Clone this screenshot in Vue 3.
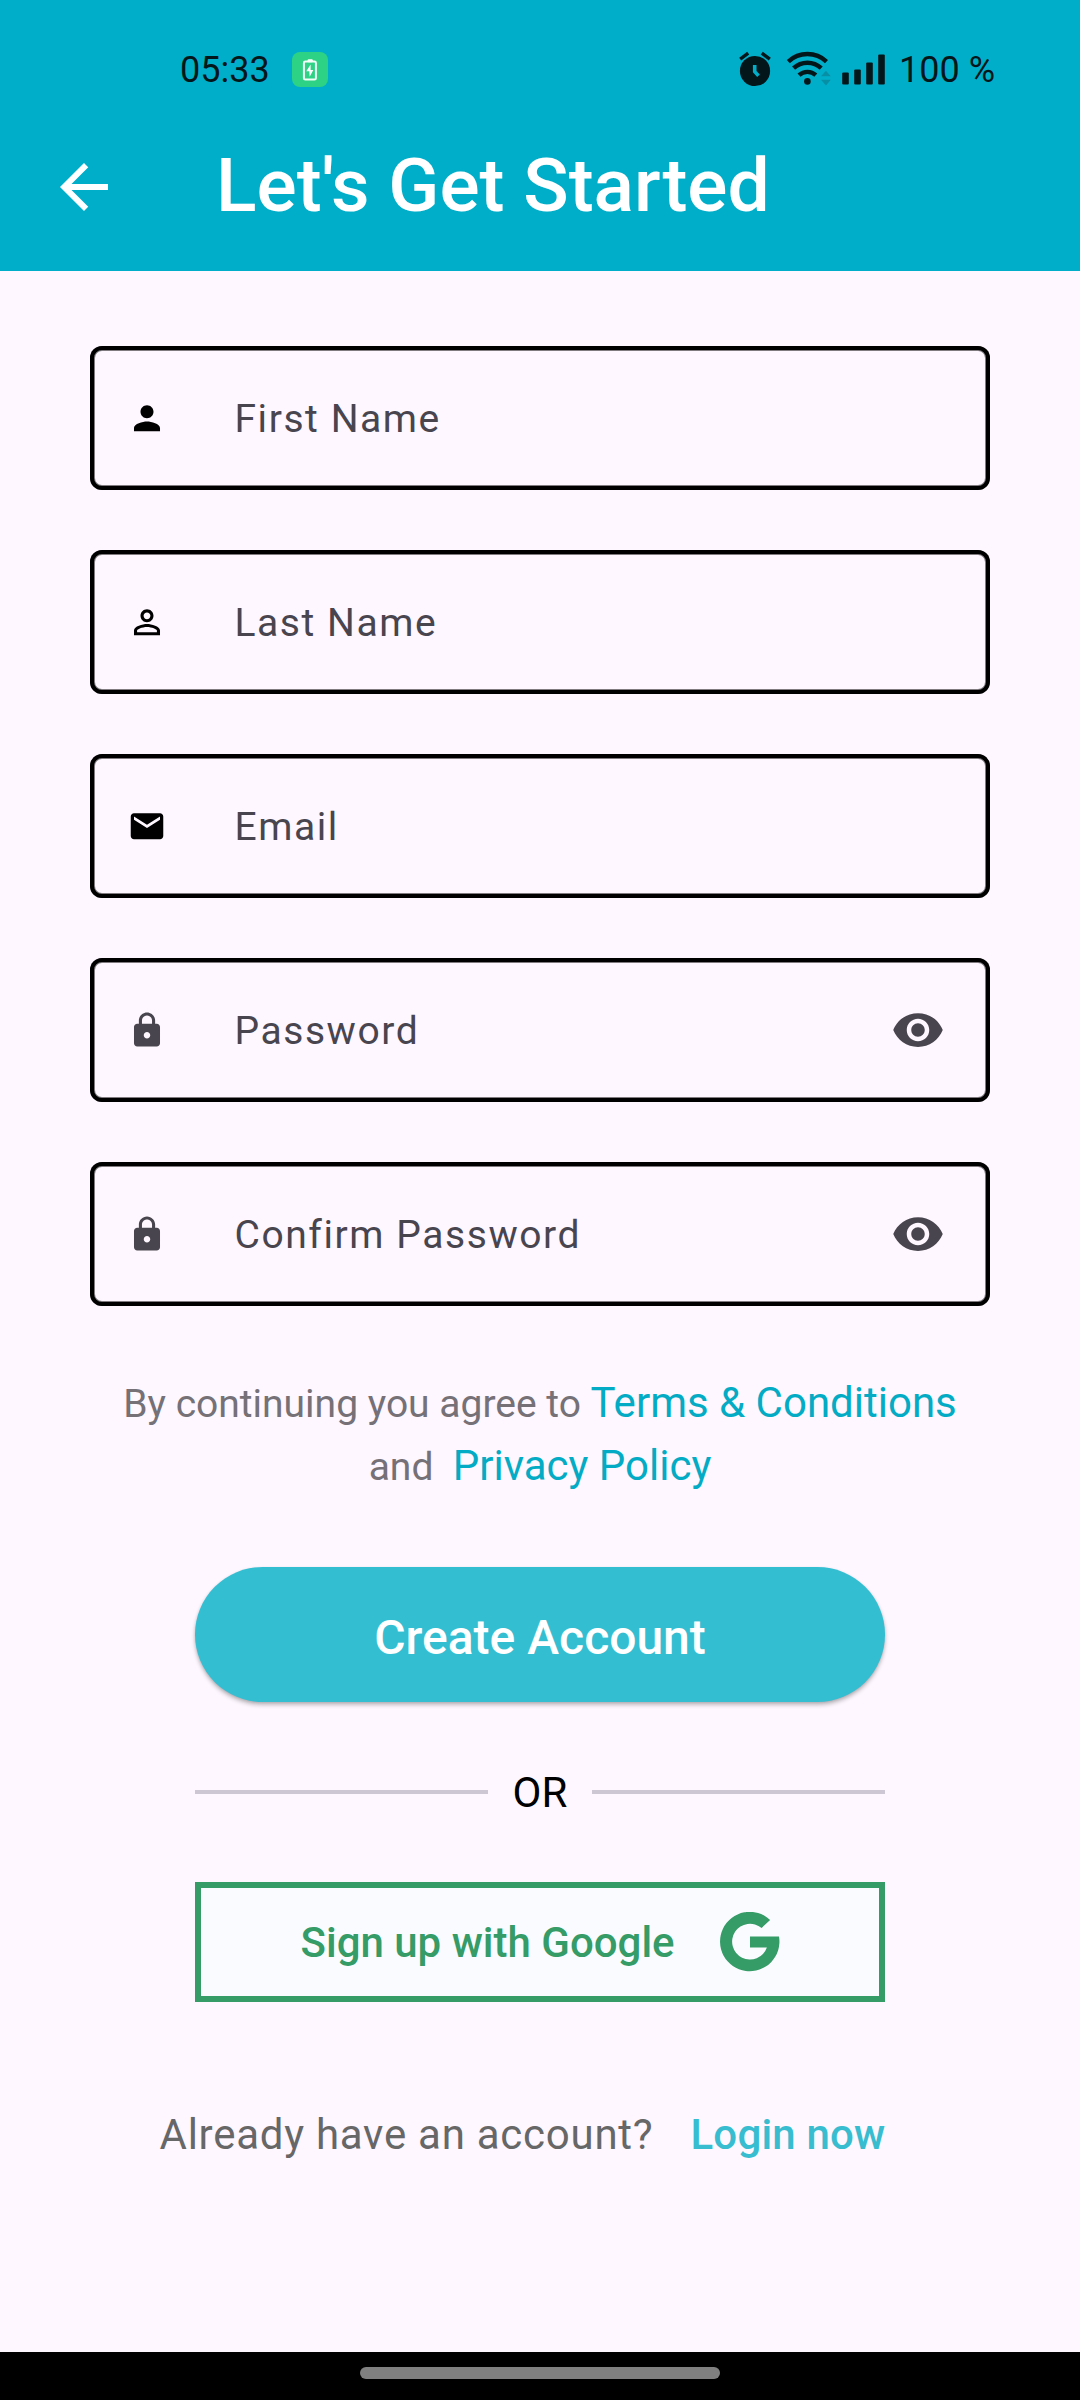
<script setup>
const fields = [
  { label: 'First Name', icon: 'person' },
  { label: 'Last Name', icon: 'personOutline' },
  { label: 'Email', icon: 'mail' },
  { label: 'Password', icon: 'lock', secret: true },
  { label: 'Confirm Password', icon: 'lock', secret: true },
]

const icons = {
  person: 'M12 12c2.21 0 4-1.79 4-4s-1.79-4-4-4-4 1.79-4 4 1.79 4 4 4zm0 2c-2.67 0-8 1.34-8 4v2h16v-2c0-2.66-5.33-4-8-4z',
  personOutline: 'M12 5.9c1.16 0 2.1.94 2.1 2.1s-.94 2.1-2.1 2.1S9.9 9.16 9.9 8s.94-2.1 2.1-2.1m0 9c2.97 0 6.1 1.46 6.1 2.1v1.1H5.9V17c0-.64 3.13-2.1 6.1-2.1M12 4C9.79 4 8 5.79 8 8s1.79 4 4 4 4-1.79 4-4-1.79-4-4-4zm0 9c-2.67 0-8 1.34-8 4v3h16v-3c0-2.66-5.33-4-8-4z',
  mail: 'M20 4H4c-1.1 0-1.99.9-1.99 2L2 18c0 1.1.9 2 2 2h16c1.1 0 2-.9 2-2V6c0-1.1-.9-2-2-2zm0 4l-8 5-8-5V6l8 5 8-5v2z',
  lock: 'M18 8h-1V6c0-2.76-2.24-5-5-5S7 3.24 7 6v2H6c-1.1 0-2 .9-2 2v10c0 1.1.9 2 2 2h12c1.1 0 2-.9 2-2V10c0-1.1-.9-2-2-2zm-6 9c-1.1 0-2-.9-2-2s.9-2 2-2 2 .9 2 2-.9 2-2 2zm3.1-9H8.9V6c0-1.71 1.39-3.1 3.1-3.1 1.71 0 3.1 1.39 3.1 3.1v2z',
  eye: 'M12 4.5C7 4.5 2.73 7.61 1 12c1.73 4.39 6 7.5 11 7.5s9.27-3.11 11-7.5c-1.73-4.39-6-7.5-11-7.5zM12 17c-2.76 0-5-2.24-5-5s2.24-5 5-5 5 2.24 5 5-2.24 5-5 5zm0-8c-1.66 0-3 1.34-3 3s1.34 3 3 3 3-1.34 3-3-1.34-3-3-3z',
}
</script>

<template>
  <div class="screen">
    <header class="header">
      <div class="status">
        <span class="clock">05:33</span>
        <svg class="charge" width="36" height="35" viewBox="0 0 36 35">
          <rect width="36" height="35" rx="8" fill="#2dd284" />
          <rect x="15.6" y="7.2" width="5.2" height="3" rx="1" fill="#fff" />
          <rect x="11.9" y="9.6" width="12" height="18" rx="1.4" fill="none" stroke="#f0fff8" stroke-width="2" />
          <path d="M18.6 12.6l-4.3 6.6h3l.4 5.6 3.6-6.9h-2.7z" fill="#fff" />
        </svg>

        <div class="indicators">
          <svg width="32" height="36" viewBox="739 50 32 36">
            <circle cx="755" cy="70" r="15.1" fill="#03161a" />
            <path d="M740.2 58.2l8-6M769.8 58.2l-8-6" stroke="#03161a" stroke-width="3.4" />
            <path d="M754.7 64v6.6l3.8 4.2" fill="none" stroke="#00aeca" stroke-width="3.6" />
          </svg>
          <svg class="wifi" width="46" height="36" viewBox="786 50 46 36">
            <g fill="none" stroke="#03161a" stroke-width="4.4">
              <path d="M788.3 60.6a28 28 0 0 1 38.2 0" />
              <path d="M793.6 67.2a20 20 0 0 1 27.6 0" />
              <path d="M799 74.2a12.4 12.4 0 0 1 16.8 0" />
            </g>
            <circle cx="807.4" cy="80.4" r="3.3" fill="#03161a" />
            <path d="M821 75.3l4.9-5.6 4.9 5.6zM821 78.8h9.8l-4.9 5.6z" fill="#078fa5" />
          </svg>
          <svg class="signal" width="44" height="31" viewBox="842 52.5 44 31" fill="#03161a">
            <rect x="842.2" y="71" width="6.6" height="12" rx="1" />
            <rect x="854.2" y="68" width="6.6" height="15" rx="1" />
            <rect x="866.2" y="61" width="6.6" height="22" rx="1" />
            <rect x="878.2" y="53" width="6.6" height="30" rx="1" />
          </svg>
          <span class="battery">100 %</span>
        </div>
      </div>
      <div class="toolbar">
        <svg class="back" width="72" height="72" viewBox="0 0 24 24" fill="#fff">
          <path d="M20 11H7.83l5.59-5.59L12 4l-8 8 8 8 1.41-1.41L7.83 13H20v-2z" />
        </svg>
        <h1>Let's Get Started</h1>
      </div>
    </header>

    <main class="content">
      <form class="form" @submit.prevent>
        <div v-for="f in fields" :key="f.label" class="field">
          <svg :class="{ muted: f.secret }" width="40" height="40" viewBox="-0.3 -0.5 24.6 24.6">
            <path :d="icons[f.icon]" />
          </svg>
          <span class="label">{{ f.label }}</span>
          <svg v-if="f.secret" class="muted" width="54" height="54" viewBox="0 0 24 24">
            <path :d="icons.eye" />
          </svg>
        </div>
      </form>

      <p class="terms">
        <span class="plain">By continuing you agree to </span><a>Terms &amp; Conditions</a><br />
        <span class="plain">and&nbsp; </span><a>Privacy Policy</a>
      </p>

      <button class="create" type="button">Create Account</button>

      <div class="divider"><i></i><span>OR</span><i></i></div>

      <button class="google" type="button">
        <span>Sign up with Google</span>
        <svg width="60" height="60" viewBox="0 0 60 60">
          <path d="M50.1 7.9A29.7 29.7 0 1 0 59 24.4H30v11.2h16.9A17.9 17.9 0 1 1 41.6 16z" fill="#359b67" />
        </svg>
      </button>

      <div class="login">
        <span>Already have an account?</span>
        <a>Login now</a>
      </div>
    </main>

    <footer class="navbar"><span></span></footer>
  </div>
</template>

<style>
body {
  margin: 0;
}
</style>

<style scoped>
.screen {
  width: 1080px;
  height: 2400px;
  display: flex;
  flex-direction: column;
  background: #fef7ff;
  font-family: Roboto, "Liberation Sans", sans-serif;
  overflow: hidden;
}
svg {
  display: block;
  flex: none;
}
.header {
  height: 271px;
  background: #00aeca;
}
.status {
  height: 101px;
  box-sizing: border-box;
  padding: 37px 85px 0 180px;
  display: flex;
  align-items: center;
  font-size: 36px;
  line-height: 64px;
  color: #03161a;
}
.clock,
.battery {
  padding-top: 2px;
}
.charge {
  margin-left: 22.5px;
}
.indicators {
  display: flex;
  align-items: center;
  margin-left: auto;
}
.wifi {
  margin-left: 15px;
}
.signal {
  margin-left: 10px;
}
.battery {
  margin-left: 13px;
}
.toolbar {
  display: flex;
  align-items: center;
  height: 170px;
  padding-left: 48px;
}
.back {
  margin-top: 2px;
}
h1 {
  margin: 0 0 2px 96px;
  font-size: 75px;
  line-height: 88px;
  font-weight: 500;
  color: #fff;
}
.content {
  flex: 1;
  display: flex;
  flex-direction: column;
  align-items: center;
  padding-top: 75px;
}
.form {
  width: 900px;
  display: flex;
  flex-direction: column;
  gap: 60px;
}
.field {
  height: 144px;
  box-sizing: border-box;
  padding: 0 45px 0 37px;
  display: flex;
  align-items: center;
  border-radius: 12px;
  box-shadow: inset 0 0 0 4px #000, inset 0 0 0 5px rgba(0, 0, 0, 0.5);
}
.muted {
  fill: #49454f;
}
.label {
  flex: 1;
  margin-left: 67.5px;
  padding-top: 2px;
  font-size: 39px;
  line-height: 48px;
  letter-spacing: 1.56px;
  color: #49454f;
}
.terms {
  margin: 65px 0 0;
  font-size: 42px;
  line-height: 63px;
  text-align: center;
  color: #03acc4;
}
.plain {
  font-size: 39px;
  line-height: 1;
  color: #757177;
}
button {
  font-family: inherit;
  border: 0;
}
.create {
  width: 690px;
  height: 135px;
  margin-top: 70px;
  padding: 6px 0 0;
  border-radius: 68px;
  background: #34bed2;
  box-shadow: 0 3px 4px rgba(0, 0, 0, 0.24), 0 1px 3px rgba(0, 0, 0, 0.1);
  color: #fff;
  font-size: 48px;
  font-weight: 500;
  flex: none;
}
.divider {
  width: 690px;
  height: 64px;
  margin-top: 58px;
  display: flex;
  align-items: center;
  justify-content: space-between;
  font-size: 42px;
  line-height: 64px;
  color: #000;
}
.divider span {
  padding-top: 2px;
}
.divider i {
  width: 293px;
  height: 4px;
  background: #cdc7d3;
}
.google {
  width: 690px;
  height: 120px;
  box-sizing: border-box;
  margin-top: 58px;
  padding: 0 0 0 99.5px;
  display: flex;
  align-items: center;
  gap: 45.5px;
  border: 6px solid #359b67;
  background: #fafbff;
  color: #359b67;
  font-size: 42px;
  font-weight: 500;
  flex: none;
}
.login {
  width: 726px;
  margin-top: 101px;
  margin-right: 35px;
  display: flex;
  justify-content: space-between;
  font-size: 42px;
  line-height: 64px;
  color: #676767;
}
.login span {
  letter-spacing: 0.74px;
}
.login a {
  font-weight: 500;
  letter-spacing: 0.2px;
  color: #38bdd0;
}
.navbar {
  height: 48px;
  display: flex;
  justify-content: center;
  align-items: flex-start;
  background: #000;
}
.navbar span {
  width: 360px;
  height: 12px;
  margin-top: 15px;
  border-radius: 6px;
  background: #808080;
}
</style>
